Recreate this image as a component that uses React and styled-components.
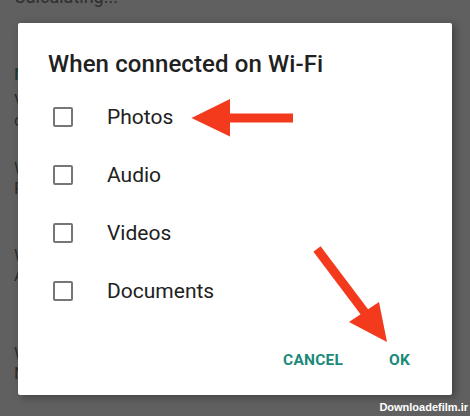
import React, { useState } from 'react';
import styled, { createGlobalStyle } from 'styled-components';

const GlobalStyle = createGlobalStyle`
  html, body {
    margin: 0;
    padding: 0;
    background: #606060;
  }
  body {
    font-family: Roboto, "Noto Sans", sans-serif;
  }
`;

const Screen = styled.div`
  position: relative;
  width: 470px;
  height: 416px;
  overflow: hidden;
  background: #606060;
`;

const Backdrop = styled.div`
  display: flex;
  flex-direction: column;
  padding: 0 14px;
  margin-top: -14px;
  color: #2e2e2e;
  font-size: 17px;
`;

const BackLine = styled.div`
  height: ${({ h }) => h || 20}px;
  line-height: ${({ h }) => h || 20}px;
  color: ${({ accent }) => (accent ? '#1c3f38' : '#2e2e2e')};
  font-weight: ${({ accent }) => (accent ? 500 : 400)};
  font-size: ${({ big }) => (big ? 18 : 17)}px;
  white-space: nowrap;
`;

const Gap = styled.div`
  height: ${({ h }) => h}px;
  flex: none;
`;

const Overlay = styled.div`
  position: absolute;
  inset: 0;
  display: flex;
  padding: 23px 18px 21px 18px;
`;

const Dialog = styled.div`
  flex: 1;
  display: flex;
  flex-direction: column;
  background: #fff;
  border-radius: 2px;
  box-shadow: 3px 2px 8px rgba(0, 0, 0, 0.35);
  padding: 27px 42px 0 30px;
`;

const Title = styled.h2`
  margin: 0 0 10px;
  font-size: 24px;
  line-height: 28px;
  font-weight: 500;
  color: #212121;
  letter-spacing: 0.1px;
`;

const Options = styled.div`
  display: flex;
  flex-direction: column;
`;

const Row = styled.label`
  display: flex;
  align-items: center;
  height: 58px;
  cursor: pointer;
`;

const Box = styled.span`
  box-sizing: border-box;
  width: 20px;
  height: 20px;
  margin-left: 5px;
  margin-right: 34px;
  border: 2.5px solid #767676;
  border-radius: 2px;
  background: ${({ checked }) => (checked ? '#1b8a79' : 'transparent')};
  border-color: ${({ checked }) => (checked ? '#1b8a79' : '#767676')};
`;

const Label = styled.span`
  font-size: 21px;
  color: #212121;
`;

const Actions = styled.div`
  display: flex;
  justify-content: flex-end;
  align-items: center;
  gap: 46px;
  margin-top: 31px;
`;

const Action = styled.button`
  border: none;
  background: none;
  padding: 0;
  font-family: Roboto, "Noto Sans", sans-serif;
  font-size: 15.5px;
  font-weight: 700;
  color: #1b8a79;
  letter-spacing: 0.2px;
  cursor: pointer;
`;

const Arrows = styled.svg`
  position: absolute;
  inset: 0;
  pointer-events: none;
`;

const Watermark = styled.div`
  position: absolute;
  right: 2px;
  bottom: 3px;
  font-family: "Liberation Sans", Arial, sans-serif;
  font-weight: 700;
  font-size: 11px;
  color: #fff;
`;

const options = ['Photos', 'Audio', 'Videos', 'Documents'];

export default function App() {
  const [checked, setChecked] = useState({});

  return (
    <>
      <GlobalStyle />
      <Screen>
        <Backdrop>
          <BackLine h={22} big>Calculating...</BackLine>
          <Gap h={55} />
          <BackLine h={22} accent>Media</BackLine>
          <Gap h={5} />
          <BackLine>Voice</BackLine>
          <BackLine>calls</BackLine>
          <Gap h={28} />
          <BackLine>When</BackLine>
          <BackLine>Photos</BackLine>
          <Gap h={47} />
          <BackLine>When</BackLine>
          <BackLine>All</BackLine>
          <Gap h={58} />
          <BackLine>When</BackLine>
          <BackLine>No</BackLine>
        </Backdrop>

        <Overlay>
          <Dialog>
            <Title>When connected on Wi-Fi</Title>
            <Options>
              {options.map(name => (
                <Row
                  key={name}
                  onClick={() => setChecked(c => ({ ...c, [name]: !c[name] }))}
                >
                  <Box checked={checked[name]} />
                  <Label>{name}</Label>
                </Row>
              ))}
            </Options>
            <Actions>
              <Action>CANCEL</Action>
              <Action>OK</Action>
            </Actions>
          </Dialog>
        </Overlay>

        <Arrows width="470" height="416" viewBox="0 0 470 416">
          <rect x="227" y="113.5" width="66" height="9" fill="#f33a1d" />
          <polygon points="191.5,118 230,99 230,136.5" fill="#f33a1d" />
          <line x1="317" y1="249" x2="366" y2="314" stroke="#f33a1d" strokeWidth="9" />
          <polygon points="349,322 379,302 387,342" fill="#f33a1d" />
        </Arrows>

        <Watermark>Downloadefilm.ir</Watermark>
      </Screen>
    </>
  );
}
